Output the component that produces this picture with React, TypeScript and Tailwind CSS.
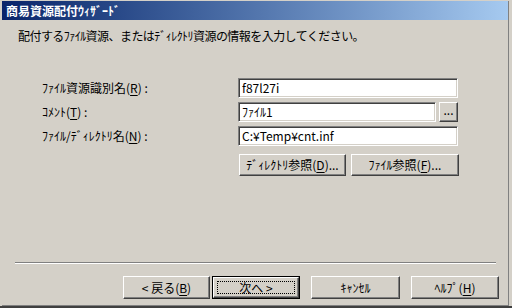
const font = { fontFamily: '"MS UI Gothic", "Noto Sans CJK JP", sans-serif' };

const raised =
  "border border-t-white border-l-white border-b-[#404040] border-r-[#404040] shadow-[inset_-1px_-1px_0_#808080]";
const sunken =
  "border border-t-[#808080] border-l-[#808080] border-b-white border-r-white shadow-[inset_1px_1px_0_#404040,inset_-1px_-1px_0_#d4d0c8]";

function Key({ k }: { k: string }) {
  return <span className="underline underline-offset-2">{k}</span>;
}

function Field({ value, width }: { value: string; width: string }) {
  return (
    <div className={`${sunken} ${width} h-[20px] bg-white pl-[3px] text-[12px] leading-[18px] text-black`}>
      {value}
    </div>
  );
}

function Button({
  children,
  width,
  height = "h-[22px]",
  isDefault = false,
}: {
  children: React.ReactNode;
  width: string;
  height?: string;
  isDefault?: boolean;
}) {
  if (isDefault) {
    return (
      <div className={`${width} ${height} border border-black`}>
        <div className={`${raised} h-full w-full p-[3px]`}>
          <div className="flex h-full w-full items-center justify-center border border-dotted border-black text-[12px] leading-none">
            {children}
          </div>
        </div>
      </div>
    );
  }
  return (
    <div className={`${raised} ${width} ${height} flex items-center justify-center text-[12px] leading-none`}>
      {children}
    </div>
  );
}

export default function App() {
  return (
    <div
      className="h-[308px] w-[512px] overflow-hidden border-b-2 border-[#404040] bg-[#d4d0c8] pl-[2px] pr-[3px] pt-px text-black"
      style={font}
    >
      <div className="flex h-full flex-col border-b border-r border-[#808080]">
        <div className="h-[19px] bg-gradient-to-r from-[#0a246a] to-[#a6caf0] pl-[4px] text-[12px] font-bold leading-[19px] text-white">
          商易資源配付ｳｨｻﾞｰﾄﾞ
        </div>

        <div className="ml-[16px] mt-[9px] text-[12px] leading-[14px] tracking-[-0.55px]">
          配付するﾌｧｲﾙ資源、またはﾃﾞｨﾚｸﾄﾘ資源の情報を入力してください。
        </div>

        <div className="ml-[40px] mt-[35px] flex flex-col gap-[4px]">
          <div className="flex items-center">
            <div className="w-[196px] text-[12px]">
              ﾌｧｲﾙ資源識別名(<Key k="R" />) :
            </div>
            <Field value="f87l27i" width="w-[220px]" />
          </div>
          <div className="flex items-center">
            <div className="w-[196px] text-[12px]">
              ｺﾒﾝﾄ(<Key k="T" />) :
            </div>
            <Field value="ﾌｧｲﾙ1" width="w-[198px]" />
            <div className="ml-[3px]">
              <Button width="w-[19px]" height="h-[20px]">
                <span className="pb-[4px]">...</span>
              </Button>
            </div>
          </div>
          <div className="flex items-center">
            <div className="w-[196px] text-[12px]">
              ﾌｧｲﾙ/ﾃﾞｨﾚｸﾄﾘ名(<Key k="N" />) :
            </div>
            <Field value="C:¥Temp¥cnt.inf" width="w-[220px]" />
          </div>
          <div className="ml-[197px] mt-[4px] flex gap-[5px]">
            <Button width="w-[107px]">
              ﾃﾞｨﾚｸﾄﾘ参照(<Key k="D" />)...
            </Button>
            <Button width="w-[108px]">
              ﾌｧｲﾙ参照(<Key k="F" />)...
            </Button>
          </div>
        </div>

        <div className="flex-1" />

        <div className="ml-[13px] w-[481px] border-b border-t border-b-white border-t-[#808080]" />

        <div className="mb-[6px] ml-[121px] mt-[12px] flex">
          <Button width="w-[87px]" height="h-[23px]">
            &lt; 戻る(<Key k="B" />)
          </Button>
          <div className="ml-[2px]">
            <Button width="w-[88px]" height="h-[23px]" isDefault>
              次へ &gt;
            </Button>
          </div>
          <div className="ml-[11px]">
            <Button width="w-[89px]" height="h-[23px]">
              ｷｬﾝｾﾙ
            </Button>
          </div>
          <div className="ml-[11px]">
            <Button width="w-[88px]" height="h-[23px]">
              ﾍﾙﾌﾟ(<Key k="H" />)
            </Button>
          </div>
        </div>
      </div>
    </div>
  );
}
